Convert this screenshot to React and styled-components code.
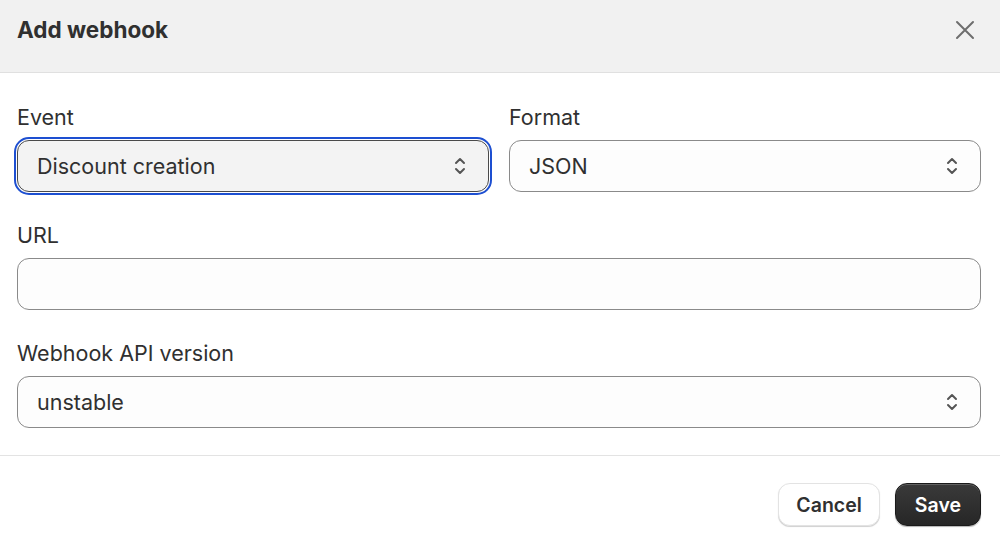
import styled, { createGlobalStyle } from 'styled-components'

const Global = createGlobalStyle`
    html, body {
        margin: 0;
        padding: 0;
        background: #ffffff;
        font-family: Inter, "Noto Sans", sans-serif;
        color: #303030;
    }
`

const Modal = styled.div`
    width: 1000px;
    height: 545px;
    display: flex;
    flex-direction: column;
    background: #fff;
    overflow: hidden;
`

const Header = styled.div`
    height: 73px;
    flex: none;
    display: flex;
    align-items: center;
    justify-content: space-between;
    padding: 0 20px 0 17px;
    background: #f1f1f1;
    border-bottom: 1px solid #e0e0e0;
    box-sizing: border-box;

    h2 {
        margin: 0 0 13px;
        font-size: 22.5px;
        font-weight: 700;
        color: #303030;
    }
`

const CloseButton = styled.button`
    border: none;
    background: transparent;
    padding: 0;
    margin: 0 0 13px;
    width: 30px;
    height: 30px;
    display: flex;
    align-items: center;
    justify-content: center;
    color: #6e6e6e;
`

const Body = styled.div`
    display: flex;
    flex-direction: column;
    gap: 28px;
    padding: 29px 19px 27px 17px;
    border-bottom: 1px solid #e3e3e3;
`

const Row = styled.div`
    display: grid;
    grid-template-columns: 1fr 1fr;
    gap: 20px;
`

const Field = styled.div`
    display: flex;
    flex-direction: column;
    gap: 8px;

    label {
        font-size: 21.5px;
        line-height: 30px;
        color: #303030;
    }
`

const Box = styled.div`
    height: 52px;
    box-sizing: border-box;
    display: flex;
    align-items: center;
    justify-content: space-between;
    padding: 0 21px 0 19px;
    border-radius: 12px;
    border: 1px solid ${p => (p.$focused ? '#4a4a4a' : '#8a8a8a')};
    background: ${p => (p.$focused ? '#f3f3f3' : '#fdfdfd')};
    outline: ${p => (p.$focused ? '2.5px solid #1d4fd1' : 'none')};
    outline-offset: 1px;
    font-size: 21.5px;
    color: #303030;
`

const Footer = styled.div`
    display: flex;
    justify-content: flex-end;
    gap: 15px;
    padding: 27px 19px 0 17px;
`

const Button = styled.button`
    height: 43px;
    box-sizing: border-box;
    border-radius: 12px;
    font-family: Inter, "Noto Sans", sans-serif;
    font-size: 19.5px;
    font-weight: 600;
    padding: 0 ${p => (p.$primary ? '19px' : '17px')};
    cursor: pointer;
    border: 1px solid ${p => (p.$primary ? '#1a1a1a' : '#e3e3e3')};
    background: ${p => (p.$primary ? 'linear-gradient(#3a3a3a, #262626)' : '#ffffff')};
    color: ${p => (p.$primary ? '#ffffff' : '#303030')};
    box-shadow: ${p => (p.$primary
        ? 'inset 0 1px 0 rgba(255,255,255,0.2), 0 1px 1px rgba(0,0,0,0.3)'
        : '0 1px 0 #d4d4d4, 0 1px 2px rgba(0,0,0,0.06)')};
`

const Chevrons = () => (
    <svg width="14" height="20" viewBox="0 0 14 20" fill="none" stroke="#555" strokeWidth="2" strokeLinecap="round" strokeLinejoin="round">
        <path d="M3 7 L7 3 L11 7" />
        <path d="M3 13 L7 17 L11 13" />
    </svg>
)

const Select = ({ value, focused }) => (
    <Box $focused={focused}>
        <span>{value}</span>
        <Chevrons />
    </Box>
)

const App = () => {
    return (
        <Modal>
            <Global />
            <Header>
                <h2>Add webhook</h2>
                <CloseButton aria-label="Close">
                    <svg width="20" height="20" viewBox="0 0 20 20" stroke="currentColor" strokeWidth="2" strokeLinecap="round">
                        <path d="M2 2 L18 18 M18 2 L2 18" />
                    </svg>
                </CloseButton>
            </Header>
            <Body>
                <Row>
                    <Field>
                        <label>Event</label>
                        <Select value="Discount creation" focused />
                    </Field>
                    <Field>
                        <label>Format</label>
                        <Select value="JSON" />
                    </Field>
                </Row>
                <Field>
                    <label>URL</label>
                    <Box />
                </Field>
                <Field>
                    <label>Webhook API version</label>
                    <Select value="unstable" />
                </Field>
            </Body>
            <Footer>
                <Button>Cancel</Button>
                <Button $primary>Save</Button>
            </Footer>
        </Modal>
    )
}

export default App
